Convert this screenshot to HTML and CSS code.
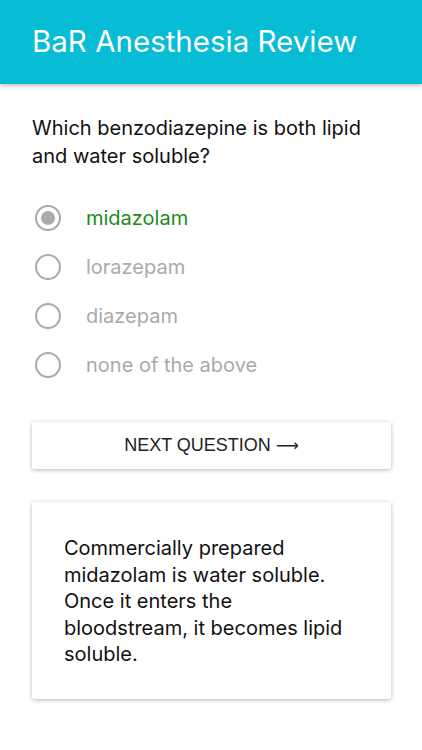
FILE: index.html
```html
<!DOCTYPE html>
<html>
<head>
  <meta charset="utf-8">
  <title>BaR Anesthesia Review</title>
  <link rel="stylesheet" href="styles.css">
</head>
<body>
  <!-- header -->
  <div class="topbar">
    <h1>BaR Anesthesia Review</h1>
  </div>

  <div class="content">
    <p class="question">Which benzodiazepine is both lipid and water soluble?</p>

    <div class="choices">
      <div class="choice correct"><span class="radio checked"></span>midazolam</div>
      <div class="choice"><span class="radio"></span>lorazepam</div>
      <div class="choice"><span class="radio"></span>diazepam</div>
      <div class="choice"><span class="radio"></span>none of the above</div>
    </div>

    <div class="next-btn">NEXT QUESTION <span class="arrow">&#10230;</span></div>

    <div class="card">
      <p>Commercially prepared midazolam is water soluble. Once it enters the bloodstream, it becomes lipid soluble.</p>
    </div>
  </div>
</body>
</html>
```

FILE: styles.css
```css
body {
  margin: 0;
  background: #fff;
  font-family: "Inter", "Liberation Sans", sans-serif;
  color: #111;
}

.topbar {
  background-color: #07bcd5;
  height: 84px;
  padding: 0 32px;
  display: flex;
  align-items: center;
  box-shadow: 0 2px 4px rgba(0,0,0,0.25);
}

.topbar h1 {
  margin: 0 0 2px 0;
  color: #fff;
  font-weight: normal;
  font-size: 29.5px;
}

.content {
  padding: 30px 31px 40px 32px;
}

.question {
  margin: 0;
  font-size: 20px;
  line-height: 28px;
}

.choices {
  margin-top: 23px;
  display: flex;
  flex-direction: column;
}

.choice {
  height: 49px;
  display: flex;
  align-items: center;
  font-size: 20px;
  color: #aaa;
}

.radio {
  width: 22px;
  height: 22px;
  border: 2px solid #aaa;
  border-radius: 50%;
  margin: 0 25px 0 3px;
  display: flex;
  align-items: center;
  justify-content: center;
}

.radio.checked::after {
  content: "";
  width: 14px;
  height: 14px;
  border-radius: 50%;
  background: #aaa;
}

.choice.correct {
  color: #1e8a1e;
}

.next-btn {
  margin-top: 33px;
  height: 47px;
  display: flex;
  align-items: center;
  justify-content: center;
  font-family: "Liberation Sans", sans-serif;
  font-size: 18px;
  color: #222;
  border-radius: 2px;
  box-shadow: 0 1px 4px rgba(0,0,0,0.3);
}

.next-btn .arrow {
  font-family: "DejaVu Sans", sans-serif;
  font-size: 16px;
  margin-left: 5px;
}

.card {
  margin-top: 33px;
  padding: 33px 40px 31px 32px;
  border-radius: 2px;
  box-shadow: 0 1px 4px rgba(0,0,0,0.3);
}

.card p {
  margin: 0;
  font-size: 20px;
  line-height: 26.5px;
}
```
